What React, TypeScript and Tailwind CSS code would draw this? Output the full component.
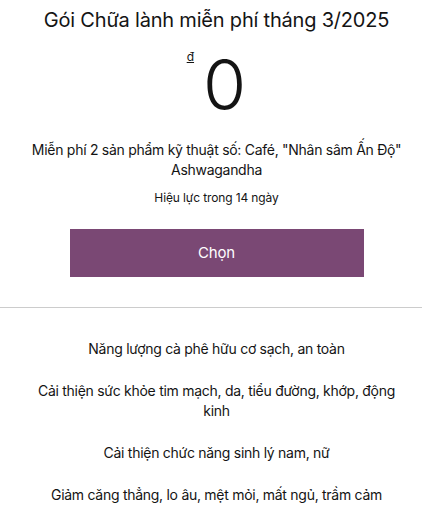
import React from "react";

export default function App() {
  const features = [
    "Năng lượng cà phê hữu cơ sạch, an toàn",
    "Cải thiện sức khỏe tim mạch, da, tiểu đường, khớp, động kinh",
    "Cải thiện chức năng sinh lý nam, nữ",
    "Giảm căng thẳng, lo âu, mệt mỏi, mất ngủ, trầm cảm",
  ];
  return (
    <div
      className="w-[422px] h-[509px] overflow-hidden bg-white text-[#141414] text-center"
      style={{ fontFamily: "Inter, 'Noto Sans', sans-serif" }}
    >
      <div className="pt-[6px] pl-[26px] pr-[15px]">
        <h1 className="text-[20px] leading-[28px] font-normal tracking-[-0.01em]">
          Gói Chữa lành miễn phí tháng 3/2025
        </h1>
        <div className="flex justify-center items-start mt-[16px] h-[70px]">
          <span className="text-[12px] leading-[14px] underline mt-[0px] mr-[9px]">đ</span>
          <span className="text-[70px] leading-[70px] font-light">0</span>
        </div>
        <p className="mt-[20px] text-[14px] leading-[20px] tracking-[-0.02em]">
          Miễn phí 2 sản phẩm kỹ thuật số: Café, "Nhân sâm Ấn Độ" Ashwagandha
        </p>
        <p className="mt-[9px] text-[12px] leading-[18px] tracking-[-0.01em]">Hiệu lực trong 14 ngày</p>
        <button className="mt-[22px] mx-auto block w-[294px] h-[48px] bg-[#7a4874] text-white text-[15px] tracking-[-0.01em]">
          Chọn
        </button>
      </div>
      <div className="mt-[30px] h-px bg-[#cccccc]" />
      <ul className="pl-[26px] pr-[15px] pt-[31px] flex flex-col gap-[22px] text-[14px] leading-[20px] tracking-[-0.02em]">
        {features.map((f) => (
          <li key={f}>{f}</li>
        ))}
      </ul>
    </div>
  );
}
